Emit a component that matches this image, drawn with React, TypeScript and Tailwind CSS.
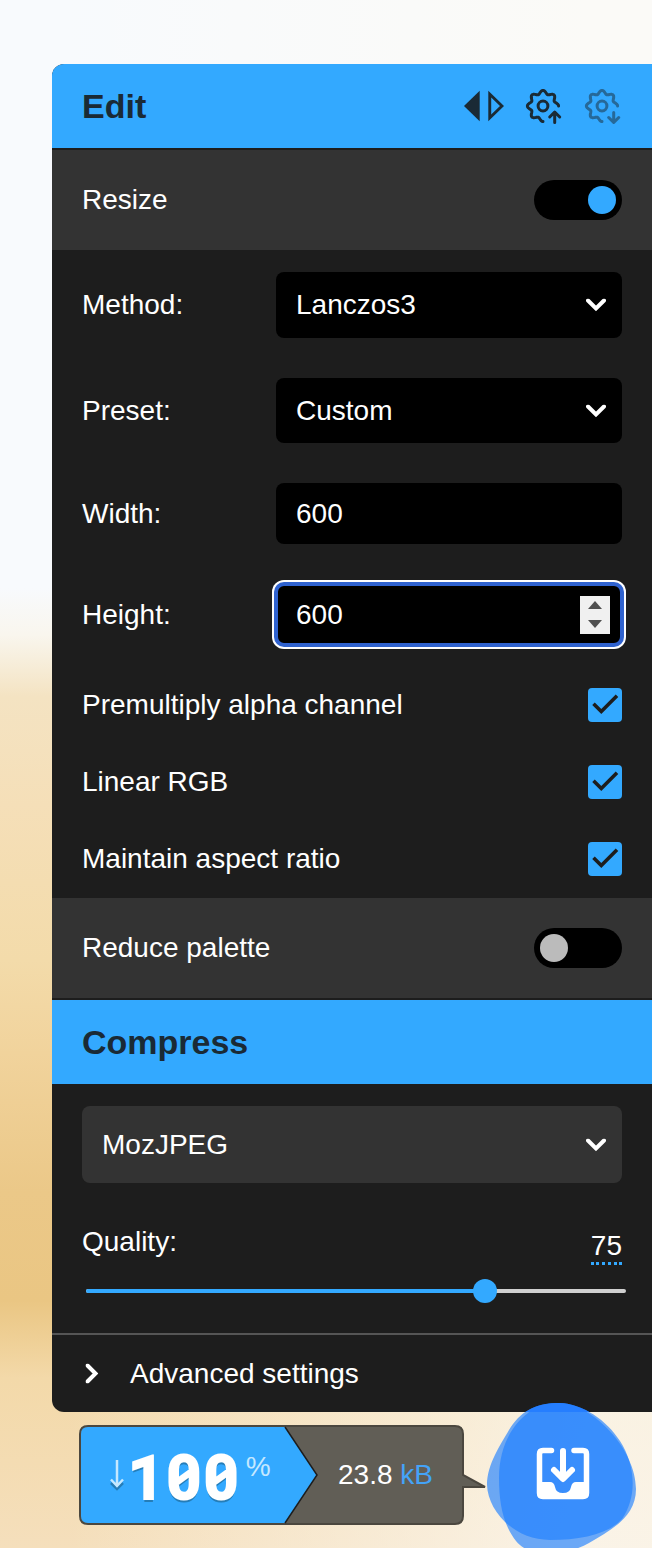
import { useState } from "react";
import type { ReactNode } from "react";

const GEAR_PATH = Array.from({ length: 109 }, (_, i) => {
  const angle = (-i * 2.5 * Math.PI) / 180;
  const radius = 13.9 + 1.7 * Math.cos(8 * angle);
  const x = 16 + radius * Math.cos(angle);
  const y = 18 + radius * Math.sin(angle);
  return `${i === 0 ? "M" : "L"}${x.toFixed(2)} ${y.toFixed(2)}`;
}).join("");

function GearIcon({ direction }: { direction: "up" | "down" }) {
  return (
    <svg
      viewBox="0 0 36 36"
      className="h-9 w-9 overflow-visible"
      fill="none"
      stroke="currentColor"
      strokeWidth="3"
      strokeLinecap="round"
      strokeLinejoin="round"
      aria-hidden="true"
    >
      <path d={GEAR_PATH} />
      <circle cx="16" cy="18" r="4.9" />
      {direction === "up" ? (
        <path d="M27.700 34.500V24.500M22.700 29L27.700 24L32.700 29" />
      ) : (
        <path d="M27.700 24.500V34M22.700 29.500L27.700 34.500L32.700 29.500" />
      )}
    </svg>
  );
}

function Chevron({ className }: { className: string }) {
  return (
    <svg viewBox="0 0 20 13" className={className} fill="none" stroke="currentColor" strokeWidth="4" strokeLinecap="round" aria-hidden="true">
      <path d="M2 2L10 10L18 2" />
    </svg>
  );
}

function SelectBox({ id, label, options, className }: { id: string; label?: string; options: string[]; className: string }) {
  return (
    <div className="relative min-w-0 flex-1">
      <select id={id} aria-label={label} className={`w-full appearance-none rounded-lg pr-14 pl-5 text-white outline-none ${className}`}>
        {options.map((o) => (
          <option key={o}>{o}</option>
        ))}
      </select>
      <Chevron className="pointer-events-none absolute top-1/2 right-4 h-[13px] w-5 -translate-y-1/2" />
    </div>
  );
}

function Field({ id, label, children }: { id: string; label: string; children: ReactNode }) {
  return (
    <div className="flex items-center">
      <label htmlFor={id} className="w-[194px] shrink-0">
        {label}
      </label>
      {children}
    </div>
  );
}

function CheckRow({ label }: { label: string }) {
  const [checked, setChecked] = useState(true);
  return (
    <label className="flex h-[34px] items-center justify-between">
      {label}
      <span className="relative flex">
        <input
          type="checkbox"
          checked={checked}
          onChange={(e) => setChecked(e.target.checked)}
          className="peer h-[34px] w-[34px] appearance-none rounded-sm bg-[#333] checked:bg-[#33a9ff]"
        />
        <svg viewBox="0 0 34 34" className="pointer-events-none absolute inset-0 hidden text-[#1d1d1d] peer-checked:block" fill="none" stroke="currentColor" strokeWidth="3.6" aria-hidden="true">
          <path d="M5.500 15.700L13.300 23.500L29 7.800" />
        </svg>
      </span>
    </label>
  );
}

function ToggleRow({ label, initial }: { label: string; initial: boolean }) {
  const [on, setOn] = useState(initial);
  return (
    <label className="flex h-[100px] items-center justify-between bg-[#333] px-[30px]">
      {label}
      <input
        type="checkbox"
        role="switch"
        checked={on}
        onChange={(e) => setOn(e.target.checked)}
        className="flex h-10 w-[88px] appearance-none items-center rounded-full bg-black px-1.5 before:block before:h-7 before:w-7 before:rounded-full before:bg-[#bbb] checked:justify-end checked:before:bg-[#33a9ff]"
      />
    </label>
  );
}

export default function App() {
  const [quality, setQuality] = useState(75);
  const [width, setWidth] = useState("600");
  const [height, setHeight] = useState("600");

  return (
    <main className="min-h-screen overflow-hidden bg-[linear-gradient(to_right,transparent_0%,transparent_10%,rgba(252,250,245,0.75)_90%),linear-gradient(to_bottom,#f8fafd_0,#f8fafd_38%,#f9f6ee_41%,#f4e3c2_45%,#f5dfb8_52%,#f3dbaa_62%,#f1d39c_68%,#ebc888_77%,#eac683_84%,#f3d9a9_89%,#f5dfbc_100%)] pt-16 font-['Liberation_Sans',Arial,sans-serif] text-[28px] leading-8 text-white">
      <section className="ml-[52px] overflow-hidden rounded-l-xl bg-[#1d1d1d]">
        <header className="flex h-[84px] items-center justify-between bg-[#33a9ff] px-[30px] text-[#1a2a35]">
          <h2 className="text-[34px] leading-10 font-bold">Edit</h2>
          <div className="flex items-center gap-[23px]">
            <button type="button" aria-label="Copy settings to other side">
              <svg viewBox="0 0 40 32" className="h-8 w-10" fill="currentColor" aria-hidden="true">
                <path d="M15.700 0.800V31.200L0 16Z" />
                <path fillRule="evenodd" d="M24.300 0.800V31.200L40 16ZM27.200 7.500L36 16L27.200 24.500Z" />
              </svg>
            </button>
            <button type="button" aria-label="Save side settings">
              <GearIcon direction="up" />
            </button>
            <button type="button" aria-label="Import saved side settings" disabled className="opacity-50">
              <GearIcon direction="down" />
            </button>
          </div>
        </header>

        <div className="border-t-2 border-[#1d1d1d]">
          <ToggleRow label="Resize" initial={true} />
        </div>

        <div className="flex flex-col gap-[43px] px-[30px] py-[22px]">
          <div className="flex flex-col gap-10">
            <Field id="method" label="Method:">
              <SelectBox id="method" options={["Lanczos3", "Mitchell", "Catmull-Rom"]} className="h-[66px] bg-black" />
            </Field>
            <Field id="preset" label="Preset:">
              <SelectBox id="preset" options={["Custom", "50%", "25%"]} className="h-[65px] bg-black" />
            </Field>
            <Field id="width" label="Width:">
              <input
                id="width"
                inputMode="numeric"
                value={width}
                onChange={(e) => setWidth(e.target.value)}
                className="h-[61px] min-w-0 flex-1 rounded-lg bg-black px-5 outline-none"
              />
            </Field>
            <Field id="height" label="Height:">
              <div className="flex h-[61px] min-w-0 flex-1 items-center rounded-lg border-2 border-[#2f62cf] bg-black pr-2.5 pl-[18px] shadow-[0_0_0_2px_#2f62cf,0_0_0_4px_#fff]">
                <input
                  id="height"
                  inputMode="numeric"
                  value={height}
                  onChange={(e) => setHeight(e.target.value)}
                  className="min-w-0 flex-1 bg-transparent outline-none"
                />
                <div className="flex h-[38px] w-[30px] flex-col items-center justify-center gap-[11px] bg-[#f0f0f0] text-[#505050]">
                  <button type="button" aria-label="Increase height" onClick={() => setHeight(String(Number(height) + 1))}>
                    <svg viewBox="0 0 14 8" className="block h-2 w-3.5" fill="currentColor" aria-hidden="true">
                      <path d="M0 8L7 0L14 8Z" />
                    </svg>
                  </button>
                  <button type="button" aria-label="Decrease height" onClick={() => setHeight(String(Number(height) - 1))}>
                    <svg viewBox="0 0 14 8" className="block h-2 w-3.5" fill="currentColor" aria-hidden="true">
                      <path d="M0 0L7 8L14 0Z" />
                    </svg>
                  </button>
                </div>
              </div>
            </Field>
          </div>
          <CheckRow label="Premultiply alpha channel" />
          <CheckRow label="Linear RGB" />
          <CheckRow label="Maintain aspect ratio" />
        </div>

        <div className="border-b-2 border-[#1d1d1d]">
          <ToggleRow label="Reduce palette" initial={false} />
        </div>

        <header className="flex h-[84px] items-center bg-[#33a9ff] px-[30px] text-[#1a2a35]">
          <h2 className="text-[34px] leading-10 font-bold">Compress</h2>
        </header>

        <div className="flex px-[30px] pt-[22px]">
          <SelectBox id="codec" label="Codec" options={["MozJPEG", "WebP", "AVIF"]} className="h-[77px] bg-[#333]" />
        </div>

        <div className="px-[30px] pt-[43px] pb-[30px]">
          <div className="flex items-start justify-between">
            <label htmlFor="quality">Quality:</label>
            <output htmlFor="quality" className="mt-1 border-b-3 border-dotted border-[#33a9ff]">
              {quality}
            </output>
          </div>
          <div className="relative mt-3.5 -mr-1 ml-1 flex h-6 items-center">
            <div className="h-1 w-full overflow-hidden rounded-full bg-[#d0d0d0]">
              <div className="h-full bg-[#33a9ff]" style={{ width: `${quality - 1}%` }} />
            </div>
            <input
              id="quality"
              type="range"
              min={0}
              max={100}
              value={quality}
              onChange={(e) => setQuality(Number(e.target.value))}
              className="absolute inset-0 w-full appearance-none bg-transparent [&::-webkit-slider-thumb]:h-6 [&::-webkit-slider-thumb]:w-6 [&::-webkit-slider-thumb]:appearance-none [&::-webkit-slider-thumb]:rounded-full [&::-webkit-slider-thumb]:bg-[#33a9ff]"
            />
          </div>
        </div>

        <button type="button" className="flex h-[79px] w-full items-center gap-7 border-t-2 border-[#555] pl-[30px] text-left">
          <Chevron className="h-[13px] w-5 -rotate-90" />
          Advanced settings
        </button>
      </section>

      <footer className="-mt-[9px] -mb-1 flex items-start pr-4 pl-[79px]">
        <div className="relative mt-[22px] h-[100px] w-[408px] shrink-0">
          <svg viewBox="0 0 408 100" className="absolute inset-0 h-full w-full" aria-hidden="true">
            <path d="M9 1H376Q384 1 384 9V50L406 62H384V91Q384 99 376 99H9Q1 99 1 91V9Q1 1 9 1Z" fill="#615e56" stroke="#4b473f" strokeWidth="2" />
            <path d="M9 2H206L238 50L206 98H9Q2 98 2 91V9Q2 2 9 2Z" fill="#33a9ff" />
            <path d="M206 2L238 50L206 98" fill="none" stroke="#1d1d1d" strokeWidth="1.500" />
          </svg>
          <div className="relative flex h-full items-center">
            <div className="flex w-[238px] items-center pl-[31px] [text-shadow:0_3px_0_#257db8]">
              <svg viewBox="0 0 14 34" className="h-[34px] w-3.5" fill="none" aria-hidden="true">
                <path d="M1 25L7 31L13 25" stroke="#257db8" strokeWidth="2.500" />
                <path d="M7 2V28M1 21.500L7 28L13 21.500" stroke="#c5e8ff" strokeWidth="2.500" />
              </svg>
              <span className="ml-1 font-['Roboto_Mono','DejaVu_Sans_Mono',monospace] text-[62px] leading-[64px] font-bold [-webkit-text-stroke:2px_#fff]">100</span>
              <span className="mb-4 ml-1.5 text-[#c5e8ff] [text-shadow:none]">%</span>
            </div>
            <p className="pl-[21px]">
              23.8 <span className="text-[#44a3f8]">kB</span>
            </p>
          </div>
        </div>
        <button type="button" aria-label="Download" className="relative h-[149px] w-[149px] shrink-0">
          <svg viewBox="0 0 149 149" className="h-full w-full" aria-hidden="true">
            <clipPath id="overlap">
              <rect width="149" height="9" />
            </clipPath>
            <path d="M69 0C105-1 149 46 149 86C149 115 122 128 102 140C77 154 42 155 29 138C18 124 12 105 12 75C12 31 39 1 69 0Z" fill="#1f7fff" fillOpacity="0.65" />
            <path d="M69 0C93-1 119 16 133 38C148 61 151 93 135 116C120 132 93 137 63 137C27 137 1 108 0 82C0 61 14 41 22 27C33 9 47 1 69 0Z" fill="#1f7fff" fillOpacity="0.65" />
            <path clipPath="url(#overlap)" d="M69 0C93-1 119 16 133 38C148 61 151 93 135 116C120 132 93 137 63 137C27 137 1 108 0 82C0 61 14 41 22 27C33 9 47 1 69 0Z" fill="#257eff" />
            <g fill="none" stroke="#fff" strokeLinecap="round" strokeLinejoin="round">
              <path d="M64.500 47.500H56Q52.500 47.500 52.500 51V90Q52.500 93.500 56 93.500H96Q99.500 93.500 99.500 90V51Q99.500 47.500 96 47.500H87" strokeWidth="5.500" />
              <path d="M76 48V73M67 67L76 76L85 67" strokeWidth="6" />
            </g>
            <path d="M53 79H63Q67 79 68 84Q69 90 76 90Q83 90 84 84Q85 79 89 79H100V94H53Z" fill="#fff" />
          </svg>
        </button>
      </footer>
    </main>
  );
}
